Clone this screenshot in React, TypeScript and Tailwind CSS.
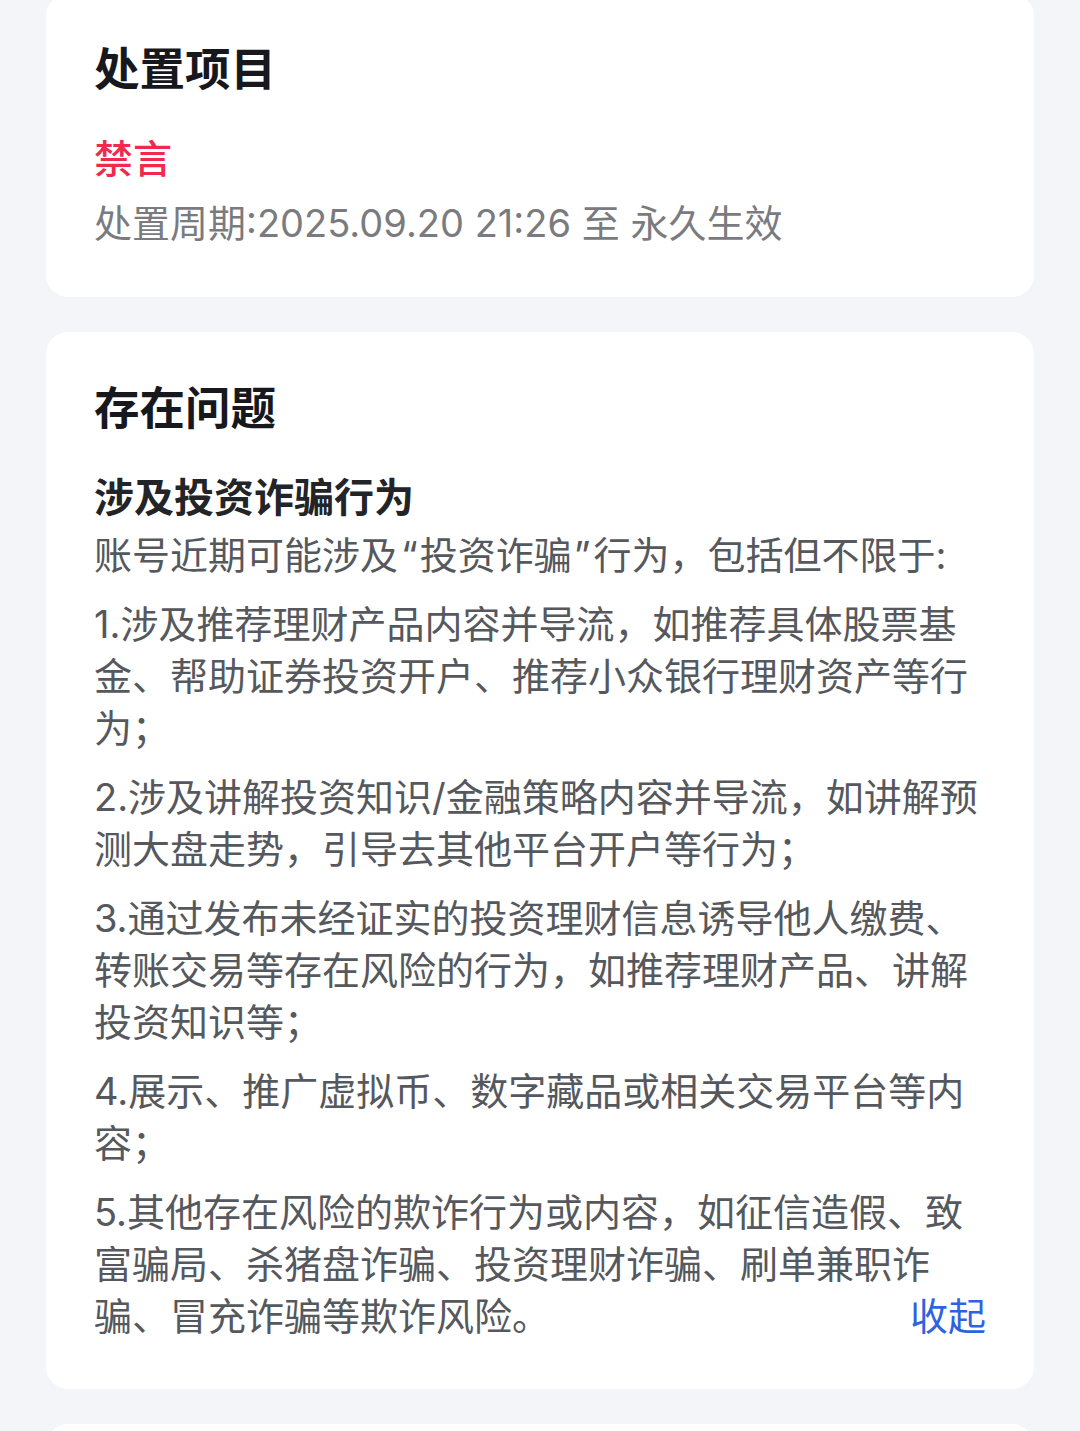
import React from "react";

const font = {
  fontFamily: 'Inter, "Noto Sans CJK SC", "Noto Sans", sans-serif',
};

export default function App() {
  const items = [
    "1.涉及推荐理财产品内容并导流，如推荐具体股票基金、帮助证券投资开户、推荐小众银行理财资产等行为；",
    "2.涉及讲解投资知识/金融策略内容并导流，如讲解预测大盘走势，引导去其他平台开户等行为；",
    "3.通过发布未经证实的投资理财信息诱导他人缴费、转账交易等存在风险的行为，如推荐理财产品、讲解投资知识等；",
    "4.展示、推广虚拟币、数字藏品或相关交易平台等内容；",
    "5.其他存在风险的欺诈行为或内容，如征信造假、致富骗局、杀猪盘诈骗、投资理财诈骗、刷单兼职诈骗、冒充诈骗等欺诈风险。",
  ];
  return (
    <div
      className="w-[1080px] h-[1431px] overflow-hidden bg-[#f4f5f8] px-[46px]"
      style={font}
    >
      <div className="mt-[-6px] rounded-[22px] bg-white px-[48px] pt-[46px] pb-[48px]">
        <div className="text-[45.5px] leading-[60px] font-semibold text-[#16181d]">
          处置项目
        </div>
        <div className="mt-[33px] text-[39px] leading-[52px] font-medium text-[#f0294f]">
          禁言
        </div>
        <div className="mt-[12px] text-[38px] leading-[52px] text-[#7a7b7e]">
          处置周期:2025.09.20 21:26 至 永久生效
        </div>
      </div>

      <div className="mt-[35px] rounded-[22px] bg-white pl-[48px] pr-[45px] pt-[47px] pb-[47px]">
        <div className="text-[45.5px] leading-[60px] font-semibold text-[#16181d]">
          存在问题
        </div>
        <div className="mt-[33px] text-[40px] leading-[52px] font-bold text-[#222428]">
          涉及投资诈骗行为
        </div>
        <div className="mt-[5px] text-[38px] leading-[52px] text-[#55585d]">
          账号近期可能涉及<span className="ml-[3px] mr-[2px]">“</span>投资诈骗<span className="ml-[2px] mr-[3px]">”</span>行为，包括但不限于:
        </div>
        <div className="flex flex-col gap-[17px] mt-[17px]">
          {items.map((t, i) => (
            <div
              key={i}
              className="flow-root text-[38px] leading-[52px] text-[#55585d]"
            >
              {t}
              {i === items.length - 1 && (
                <span className="float-right mr-[3px] text-[38px] leading-[52px] text-[#2f62df]">
                  收起
                </span>
              )}
            </div>
          ))}
        </div>
      </div>

      <div className="mt-[35px] h-[80px] rounded-[22px] bg-white" />
    </div>
  );
}
